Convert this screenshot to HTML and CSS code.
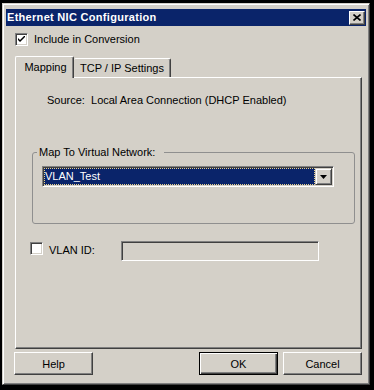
FILE: index.html
```html
<!DOCTYPE html>
<html lang="en">

<head>
    <meta charset="UTF-8">
    <title>Ethernet NIC Configuration</title>
    <link rel="stylesheet" href="styles.css">
</head>

<body>
    <div class="window">
        <div class="titlebar">
            <span class="title">Ethernet NIC Configuration</span>
            <span class="close-btn">
                <svg width="8" height="7" viewBox="0 0 8 7">
                    <path d="M0.5 0.5 L7.5 6.5 M7.5 0.5 L0.5 6.5" stroke="#000" stroke-width="1.6" fill="none"/>
                </svg>
            </span>
        </div>

        <div class="content">
            <div class="check-row include">
                <span class="checkbox">
                    <svg width="7" height="7" viewBox="0 0 7 7">
                        <path d="M0 2 L2 4 L7 -1 L7 1 L2 6 L0 4 Z" fill="#000"/>
                    </svg>
                </span>
                <span>Include in Conversion</span>
            </div>

            <div class="tabs">
                <div class="tab tab-mapping active">Mapping</div>
                <div class="tab tab-tcp">TCP / IP Settings</div>
            </div>

            <div class="panel">
                <p class="source">Source:&nbsp; Local Area Connection (DHCP Enabled)</p>

                <fieldset class="group">
                    <legend>Map To Virtual Network:</legend>
                    <div class="combo">
                        <span class="combo-value">VLAN_Test</span>
                        <span class="combo-btn">
                            <svg width="7" height="4" viewBox="0 0 7 4"><polygon points="0,0 7,0 3.5,4" fill="#000"/></svg>
                        </span>
                    </div>
                </fieldset>

                <div class="vlan-row">
                    <span class="checkbox"></span>
                    <span class="vlan-label">VLAN ID:</span>
                    <span class="textbox"></span>
                </div>
            </div>

            <div class="buttons">
                <button class="btn btn-help">Help</button>
                <button class="btn btn-ok">OK</button>
                <button class="btn">Cancel</button>
            </div>
        </div>
    </div>
</body>

</html>
```

FILE: styles.css
```css
* {
    box-sizing: border-box;
}

body {
    margin: 0;
    padding: 3px 4px 5px 2px;
    background-color: #000;
    font-family: "Liberation Sans", Arial, sans-serif;
    font-size: 11px;
    line-height: 13px;
    color: #000;
}

.window {
    width: 368px;
    height: 382px;
    padding: 5px 3px 3px 3px;
    background-color: #d4d0c8;
    border: 1px solid;
    border-color: #d4d0c8 #404040 #404040 #d4d0c8;
    box-shadow: inset 1px 1px #fff, inset -1px -1px #808080;
    display: flex;
    flex-direction: column;
}

.titlebar {
    height: 17px;
    padding: 0 1px 0 1px;
    background-color: #0a246a;
    color: #fff;
    font-weight: bold;
    letter-spacing: 0.3px;
    display: flex;
    align-items: center;
    justify-content: space-between;
}

.close-btn {
    width: 16px;
    height: 14px;
    background-color: #d4d0c8;
    border: 1px solid;
    border-color: #fff #404040 #404040 #fff;
    box-shadow: inset -1px -1px #808080;
    display: flex;
    align-items: center;
    justify-content: center;
}

.content {
    flex: 1;
    padding: 0 4px 0 9px;
    display: flex;
    flex-direction: column;
}

.check-row {
    display: flex;
    align-items: center;
    gap: 6px;
}

.include {
    margin-top: 7px;
    height: 13px;
}

.checkbox {
    width: 13px;
    height: 13px;
    flex: none;
    background-color: #fff;
    border: 1px solid;
    border-color: #808080 #fff #fff #808080;
    box-shadow: inset 1px 1px #404040, inset -1px -1px #d4d0c8;
    display: flex;
    align-items: center;
    justify-content: center;
}

/* tabs */
.tabs {
    margin-top: 10px;
    margin-bottom: -1px;
    height: 22px;
    display: flex;
    align-items: flex-end;
    position: relative;
    z-index: 1;
}

.tab {
    height: 19px;
    margin-bottom: 1px;
    padding-top: 3px;
    background-color: #d4d0c8;
    border-top: 1px solid #fff;
    border-left: 1px solid #fff;
    border-right: 1px solid #404040;
    border-radius: 2px 2px 0 0;
    box-shadow: inset -1px 0 #808080;
    text-align: center;
}

.tab.active {
    height: 22px;
    margin-bottom: 0;
    padding-top: 4px;
}

.tab-mapping {
    width: 59px;
    padding-left: 2px;
}

.tab-tcp {
    width: 97px;
    border-left: none;
}

/* panel */
.panel {
    height: 272px;
    border: 1px solid;
    border-color: #fff #404040 #404040 #fff;
    box-shadow: inset -1px -1px #808080;
    display: flex;
    flex-direction: column;
}

.source {
    margin: 16px 0 0 31px;
}

.group {
    margin: 39px 6px 0 16px;
    padding: 7px 0 36px 0;
    border: 1px solid #8f8f8f;
    border-radius: 3px;
}

.group legend {
    margin-left: 4px;
    padding: 0 9px 0 2px;
    line-height: 13px;
}

.combo {
    width: 292px;
    height: 21px;
    margin-left: 9px;
    padding: 1px;
    background-color: #fff;
    border: 1px solid;
    border-color: #808080 #fff #fff #808080;
    box-shadow: inset 1px 1px #404040, inset -1px -1px #d4d0c8;
    display: flex;
}

.combo-value {
    flex: 1;
    padding-left: 0;
    background-color: #0a246a;
    color: #fff;
    border: 1px dotted #e8d08a;
    line-height: 15px;
}

.combo-btn {
    width: 17px;
    background-color: #d4d0c8;
    border: 1px solid;
    border-color: #d4d0c8 #404040 #404040 #d4d0c8;
    box-shadow: inset 1px 1px #fff, inset -1px -1px #808080;
    display: flex;
    align-items: center;
    justify-content: center;
}

.vlan-row {
    margin: 17px 0 0 14px;
    height: 20px;
    display: flex;
    align-items: flex-start;
}

.vlan-row .checkbox {
    margin-top: 1px;
}

.vlan-label {
    width: 78px;
    margin-top: 3px;
    padding-left: 6px;
}

.textbox {
    width: 198px;
    height: 20px;
    background-color: #d4d0c8;
    border: 1px solid;
    border-color: #808080 #fff #fff #808080;
    box-shadow: inset 1px 1px #404040, inset -1px -1px #d4d0c8;
}

/* buttons */
.buttons {
    margin-top: 3px;
    display: flex;
    gap: 5px;
}

.btn {
    width: 79px;
    height: 23px;
    padding: 0;
    font-family: inherit;
    font-size: 11px;
    color: #000;
    background-color: #d4d0c8;
    border: 1px solid;
    border-color: #fff #404040 #404040 #fff;
    box-shadow: inset -1px -1px #808080;
}

.btn-help {
    margin-left: -1px;
    margin-right: auto;
}

.btn-ok {
    border-color: #000;
    box-shadow: inset 1px 1px #fff, inset -1px -1px #404040, inset -2px -2px #808080;
}
```
